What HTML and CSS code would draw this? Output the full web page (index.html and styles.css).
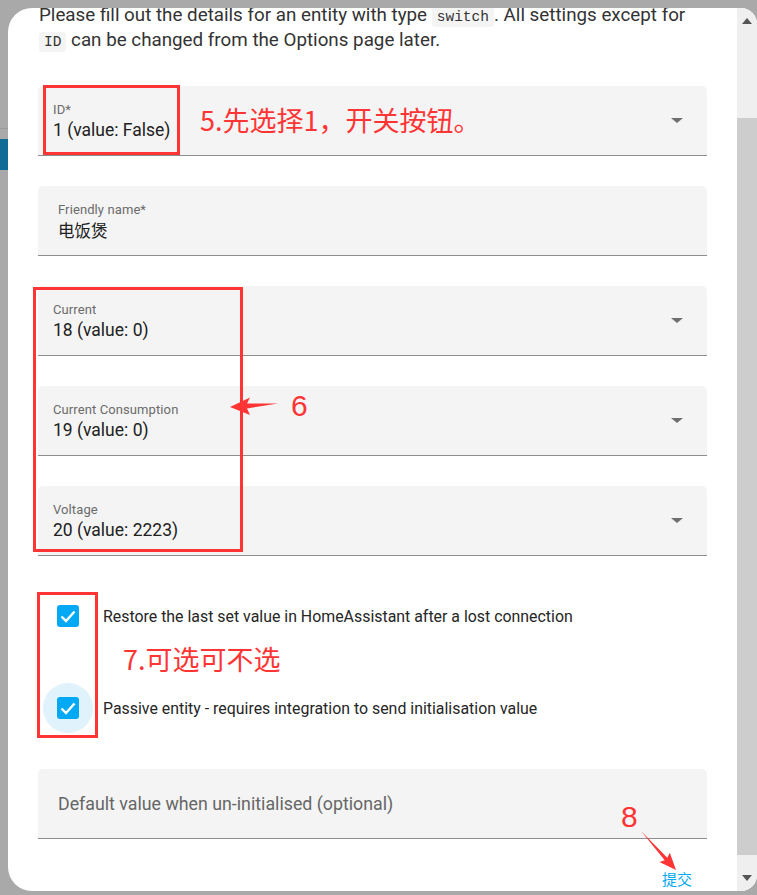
FILE: index.html
```html
<!DOCTYPE html>
<html lang="en">
<head>
    <meta charset="UTF-8">
    <meta name="viewport" content="width=device-width, initial-scale=1.0">
    <title>Add entity</title>
    <link rel="stylesheet" href="styles.css">
</head>
<body>
    <div class="screen">
        <!-- bit of the page behind the dialog -->
        <div class="page-peek">
            <div class="peek-line"></div>
            <div class="peek-tab"></div>
        </div>

        <div class="dialog">
            <div class="dialog-body">
                <p class="intro">Please fill out the details for an entity with type <code>switch</code>. All settings except for<br><code>ID</code> can be changed from the Options page later.</p>

                <div class="fields">
                    <div class="field select">
                        <div class="field-text">
                            <span class="field-label">ID*</span>
                            <span class="field-value">1 (value: False)</span>
                        </div>
                        <span class="caret"></span>
                    </div>
                    <div class="field textfield">
                        <div class="field-text">
                            <span class="field-label">Friendly name*</span>
                            <span class="field-value cjk">电饭煲</span>
                        </div>
                    </div>
                    <div class="field select">
                        <div class="field-text">
                            <span class="field-label">Current</span>
                            <span class="field-value">18 (value: 0)</span>
                        </div>
                        <span class="caret"></span>
                    </div>
                    <div class="field select">
                        <div class="field-text">
                            <span class="field-label">Current Consumption</span>
                            <span class="field-value">19 (value: 0)</span>
                        </div>
                        <span class="caret"></span>
                    </div>
                    <div class="field select">
                        <div class="field-text">
                            <span class="field-label">Voltage</span>
                            <span class="field-value">20 (value: 2223)</span>
                        </div>
                        <span class="caret"></span>
                    </div>
                </div>

                <div class="checks">
                    <label class="check">
                        <span class="check-hit">
                            <span class="check-box"><svg viewBox="0 0 22 22"><polyline points="4.5,11.5 9,16 17.5,6.5"/></svg></span>
                        </span>
                        <span class="check-text">Restore the last set value in HomeAssistant after a lost connection</span>
                    </label>
                    <label class="check">
                        <span class="check-hit focused">
                            <span class="check-box"><svg viewBox="0 0 22 22"><polyline points="4.5,11.5 9,16 17.5,6.5"/></svg></span>
                        </span>
                        <span class="check-text">Passive entity - requires integration to send initialisation value</span>
                    </label>
                </div>

                <div class="field textfield empty">
                    <span class="placeholder">Default value when un-initialised (optional)</span>
                </div>

                <div class="actions">
                    <button class="submit">提交</button>
                </div>
            </div>

            <div class="scrollbar">
                <span class="sb-arrow up"></span>
                <div class="sb-thumb"></div>
                <span class="sb-arrow down"></span>
            </div>
        </div>

        <!-- red hand-drawn notes on top of the screenshot -->
        <div class="annotations">
            <div class="note-box box-id"></div>
            <div class="note-text note-5">5.先选择1，开关按钮。</div>
            <div class="note-box box-sensors"></div>
            <div class="note-text note-6">6</div>
            <div class="note-box box-checks"></div>
            <div class="note-text note-7">7.可选可不选</div>
            <div class="note-text note-8">8</div>
            <svg class="note-arrows" viewBox="0 0 757 895">
                <polygon points="230,407 250,397.5 247,403.5 278,403.5 247,408.5 250,415"/>
                <polygon points="641,831 664.7,860.2 659.4,862.1 676,870 669.8,852.7 667.3,857.8"/>
            </svg>
        </div>
    </div>
</body>
</html>
```

FILE: styles.css
```css
/* Global */
* { box-sizing: border-box; margin: 0; padding: 0; }
body {
    font-family: Roboto, "Noto Sans", sans-serif;
    background: #a9a9a9;
    color: #212121;
    width: 757px;
    height: 895px;
    overflow: hidden;
}

.screen {
    position: relative;
    display: flex;
    height: 895px;
}

/* page behind the backdrop */
.page-peek {
    width: 8px;
    flex: none;
    padding-top: 128px;
}
.peek-line { height: 1px; background: #9a9a9a; }
.peek-tab { height: 31px; margin-top: 10px; background: #116b97; }

/* Dialog */
.dialog {
    display: flex;
    margin-top: 8px;
    height: 883px;
    flex: 1;
    background: #fff;
    border-radius: 24px 16px 16px 24px;
    overflow: hidden;
}

.dialog-body {
    flex: 1;
    padding: 0 30px;
    overflow: hidden;
}

.intro {
    margin-top: -5px;
    font-size: 18.8px;
    line-height: 25px;
    color: #333;
    padding-left: 1px;
    white-space: nowrap;
}
.intro code {
    font-family: "Liberation Mono", "DejaVu Sans Mono", monospace;
    font-size: 14.5px;
    line-height: 1;
    background: #f4f4f4;
    padding: 2px 5px;
    border-radius: 3px;
    color: #333;
}

/* Fields */
.fields {
    margin-top: 33px;
    display: flex;
    flex-direction: column;
    gap: 30px;
}

.field {
    height: 70px;
    background: #f4f4f4;
    border-bottom: 1px solid #8d8d8d;
    border-radius: 5px 5px 0 0;
    display: flex;
    align-items: center;
    padding: 0 30px 0 15px;
}
.field.textfield { padding-left: 20px; }

.field-text {
    flex: 1;
    display: flex;
    flex-direction: column;
    align-self: flex-start;
    padding-top: 15px;
}
.field-label {
    font-size: 13px;
    line-height: 18px;
    color: #6b6b6b;
    letter-spacing: 0.1px;
}
.field-value {
    font-size: 17.5px;
    line-height: 22px;
    color: #212121;
}
.field-value.cjk {
    font-family: "Noto Sans CJK SC", sans-serif;
    font-size: 16.5px;
}

.caret {
    width: 0;
    height: 0;
    border-left: 6px solid transparent;
    border-right: 6px solid transparent;
    border-top: 5px solid #6f6f6f;
    margin-right: -6px;
}

.placeholder {
    font-size: 17.8px;
    color: #666;
}

/* Checkboxes */
.checks {
    margin-top: 35px;
    display: flex;
    flex-direction: column;
    gap: 42px;
}
.check {
    display: flex;
    align-items: center;
    gap: 10px;
    padding-left: 5px;
}
.check-hit {
    width: 50px;
    height: 50px;
    border-radius: 50%;
    display: flex;
    align-items: center;
    justify-content: center;
}
.check-hit.focused { background: #e0f2fc; }
.check-box {
    width: 22px;
    height: 22px;
    background: #03a9f4;
    border-radius: 3px;
    display: flex;
}
.check-box svg {
    width: 22px;
    height: 22px;
    fill: none;
    stroke: #fff;
    stroke-width: 2.4;
}
.check-text {
    font-size: 15.9px;
    color: #262626;
}

.checks + .field { margin-top: 36px; }

/* Actions */
.actions {
    display: flex;
    justify-content: flex-end;
    margin-top: 30px;
    padding-right: 15px;
}
.submit {
    background: none;
    border: none;
    padding: 0;
    font-family: "Noto Sans CJK SC", sans-serif;
    font-size: 15px;
    line-height: 20px;
    color: #03a9f4;
}

/* Scrollbar */
.scrollbar {
    width: 20px;
    flex: none;
    background: #efefef;
    display: flex;
    flex-direction: column;
    align-items: center;
}
.sb-thumb {
    margin-top: 94px;
    height: 737px;
    width: 20px;
    background: #cdcdcd;
}
.sb-arrow {
    width: 0;
    height: 0;
    border-left: 5px solid transparent;
    border-right: 5px solid transparent;
}
.sb-arrow.up { margin-top: 10px; border-bottom: 6px solid #555; }
.sb-arrow.down { margin-top: 20px; border-top: 6px solid #555; }

/* Annotations */
.annotations {
    position: absolute;
    inset: 0;
    pointer-events: none;
}
.note-box {
    position: absolute;
    border: 3px solid #ff3434;
}
.box-id { left: 43px; top: 85px; width: 137px; height: 70px; }
.box-sensors { left: 33px; top: 287px; width: 210px; height: 265px; }
.box-checks { left: 37px; top: 592px; width: 61px; height: 146px; }

.note-text {
    position: absolute;
    color: #ff3434;
    font-family: "Noto Sans CJK SC", sans-serif;
    font-size: 27px;
    line-height: 30px;
}
.note-5 { left: 200px; top: 105px; }
.note-6 { left: 291px; top: 391px; font-family: "Liberation Sans", sans-serif; font-size: 30px; }
.note-7 { left: 123px; top: 644px; }
.note-8 { left: 621px; top: 802px; font-family: "Liberation Sans", sans-serif; font-size: 30px; }

.note-arrows {
    position: absolute;
    left: 0;
    top: 0;
    width: 757px;
    height: 895px;
    fill: #ff3434;
}
```
